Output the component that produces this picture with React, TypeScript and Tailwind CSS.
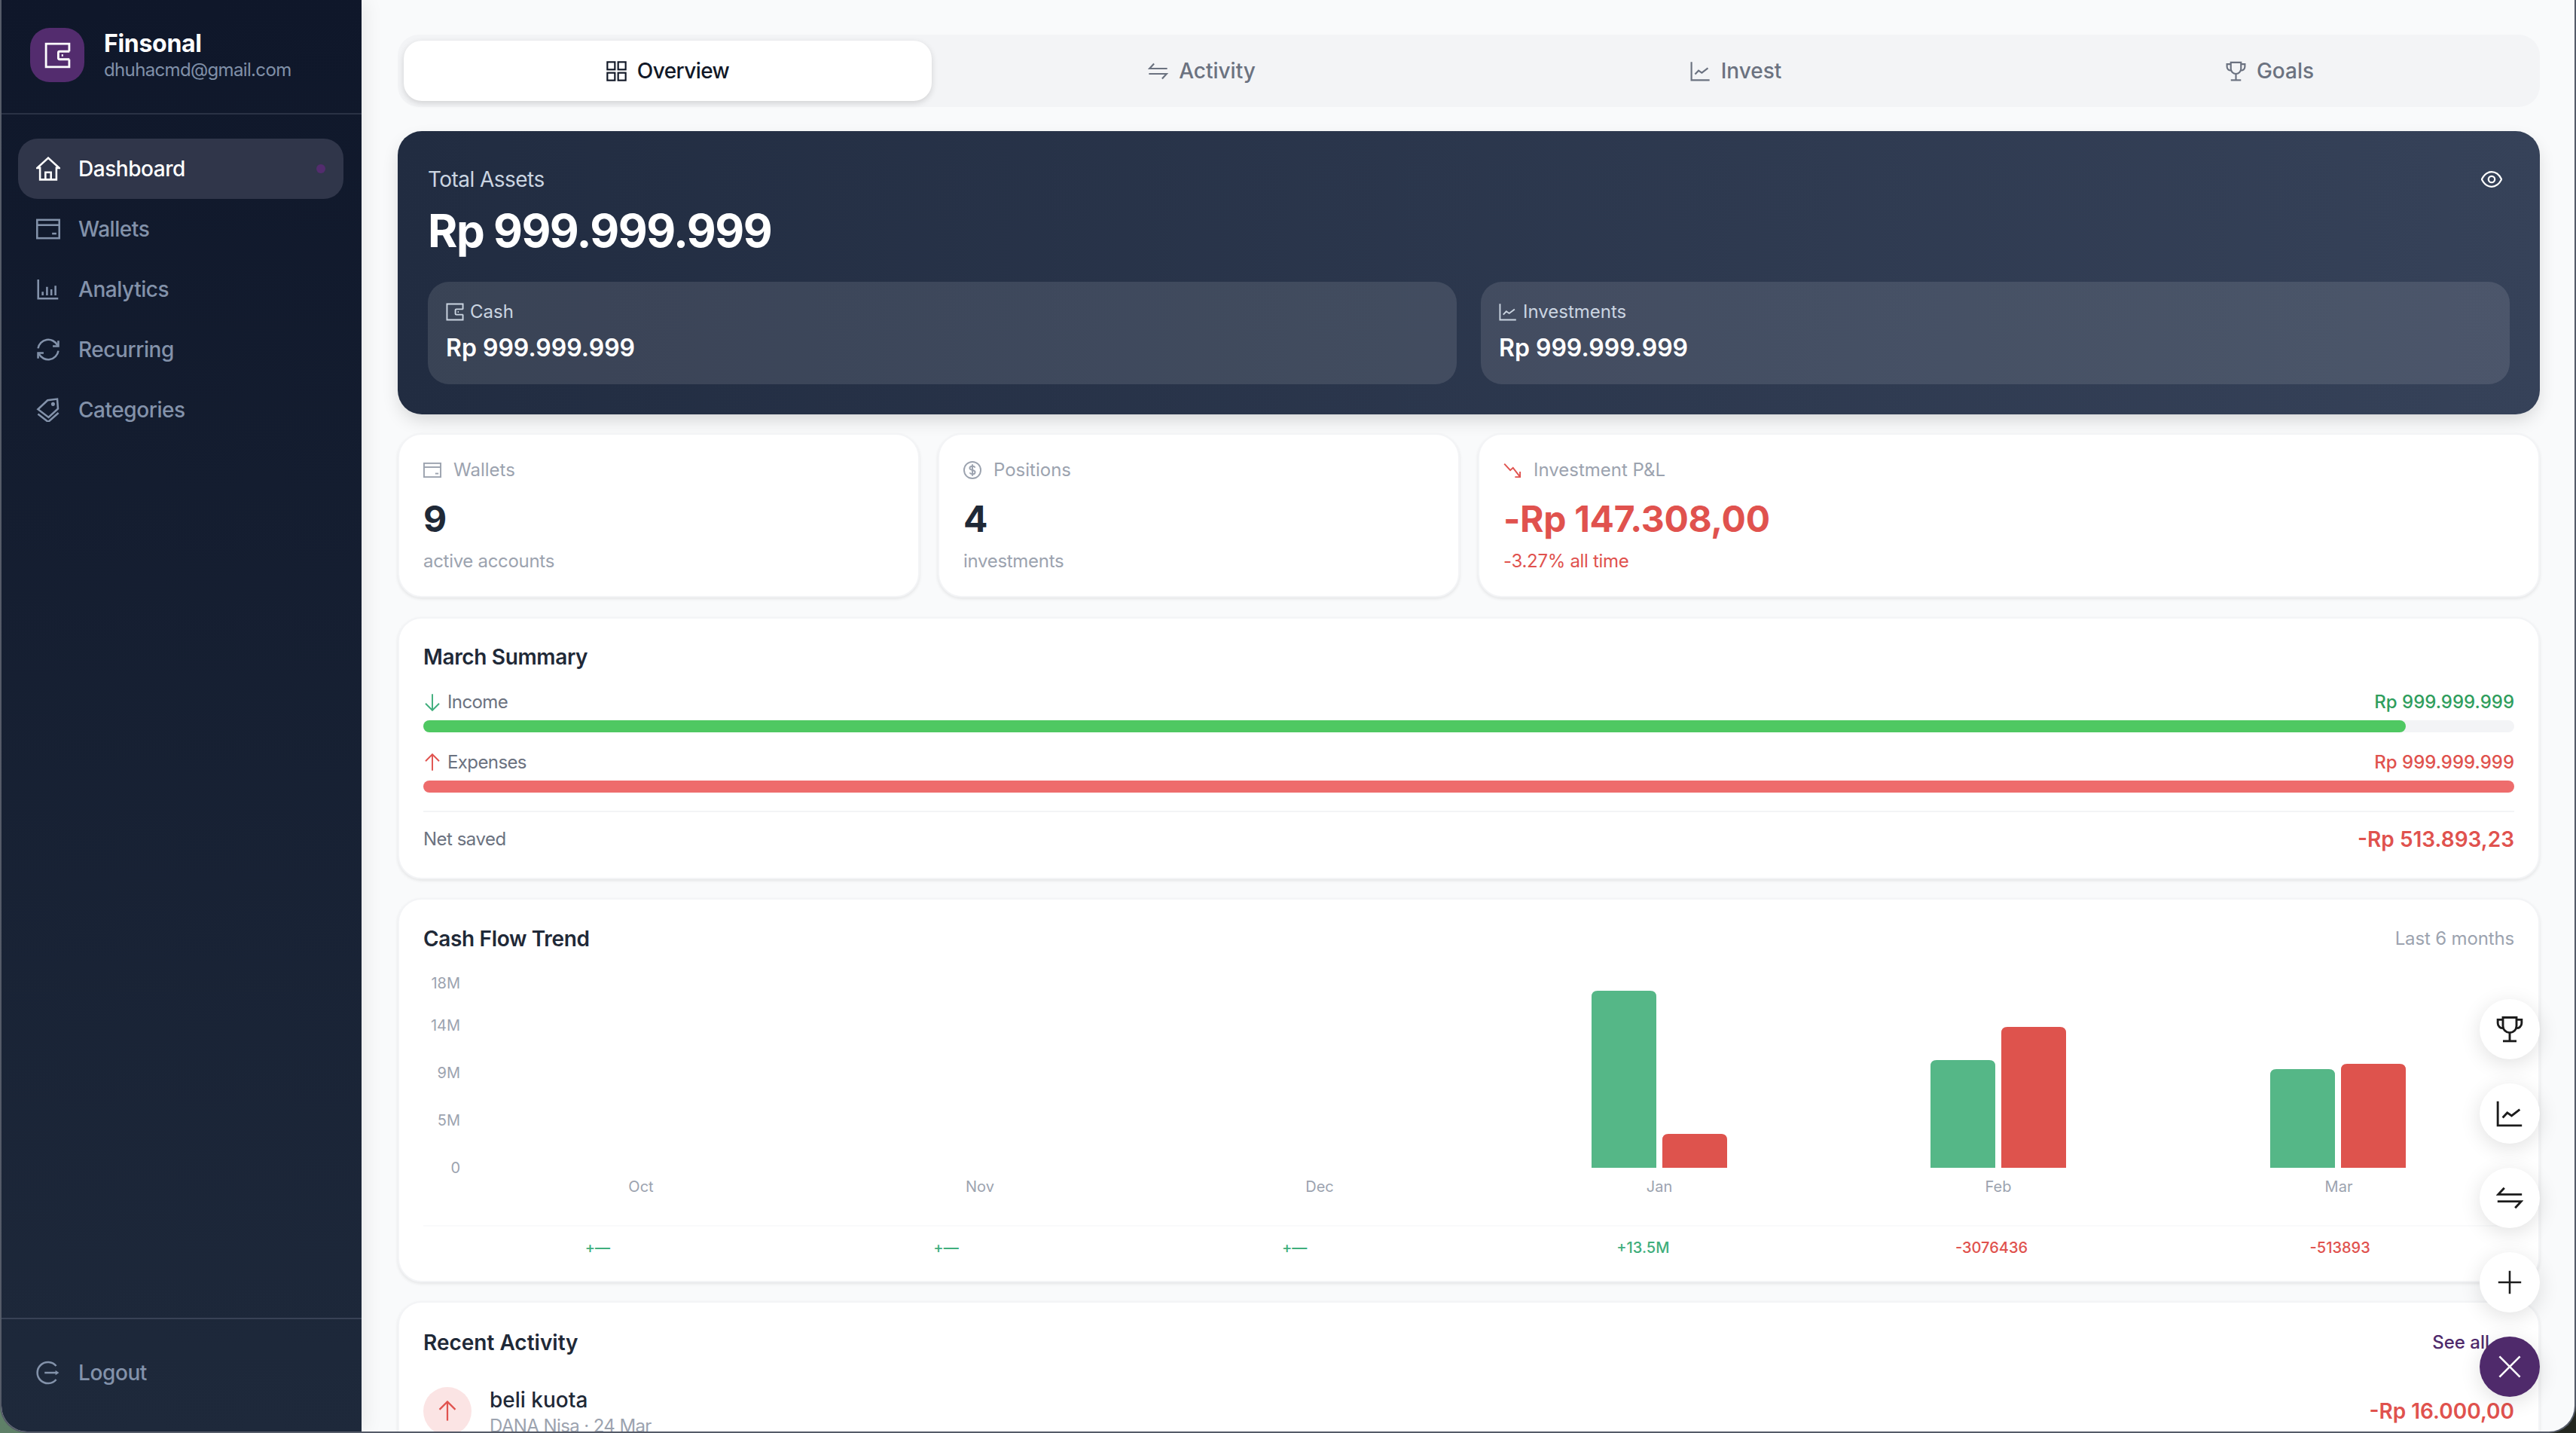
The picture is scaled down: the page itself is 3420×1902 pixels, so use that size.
import type { ReactNode } from "react";

// shared outline icon, square joins like the reference set
function Icon({ size = 32, className, children }: { size?: number; className?: string; children: ReactNode }) {
  return (
    <svg
      width={size}
      height={size}
      viewBox="2 2 20 20"
      fill="none"
      stroke="currentColor"
      strokeWidth={1.6}
      strokeLinejoin="miter"
      className={className}
    >
      {children}
    </svg>
  );
}

const HomeIcon = (p: { size?: number; className?: string }) => (
  <Icon {...p}>
    <path d="M12 3 3 11.3h2.2V21h13.6v-9.7H21Z" />
    <path d="M9.7 21v-6h4.6v6" />
  </Icon>
);
const CardIcon = (p: { size?: number; className?: string }) => (
  <Icon {...p}>
    <rect x="2.8" y="4.4" width="18.4" height="15.2" />
    <path d="M3 8.7h18" />
    <path d="M15.2 15.8h3.6" />
  </Icon>
);
const BarsIcon = (p: { size?: number; className?: string }) => (
  <Icon {...p}>
    <path d="M3.7 3.8v15.8h16.6" />
    <path d="M7.4 14v3M11 10v7M14.6 12v5M18 9v8" />
  </Icon>
);
const RepeatIcon = (p: { size?: number; className?: string }) => (
  <Icon {...p}>
    <path d="M3.6 11A8.5 8.5 0 0 1 19.6 8.4" />
    <path d="M20.4 4.6v4.6h-4.6" />
    <path d="M20.4 13A8.5 8.5 0 0 1 4.4 15.6" />
    <path d="M3.6 19.4v-4.6h4.6" />
  </Icon>
);
const TagsIcon = (p: { size?: number; className?: string }) => (
  <Icon {...p}>
    <path d="M3.5 11.5 11.5 4l8-1 .6 8-7.8 7.2Z" />
    <path d="M3.5 15.5 12 22l8.5-7.5" />
    <circle cx="16" cy="7.2" r=".8" />
  </Icon>
);
const LogoutIcon = (p: { size?: number; className?: string }) => (
  <Icon {...p}>
    <path d="M18.6 6.4a8.8 8.8 0 1 0 0 11.2" />
    <path d="M9 12h10" />
    <path d="m18 10 3 2-3 2Z" fill="currentColor" stroke="none" />
  </Icon>
);
const WalletIcon = (p: { size?: number; className?: string }) => (
  <Icon {...p}>
    <path d="M20.8 9V3.2H3.2v17.6h17.6V15" />
    <path d="M21 9h-7.5a1 1 0 0 0-1 1v4a1 1 0 0 0 1 1H21" />
    <path d="M15 12h1.2" />
  </Icon>
);
const GridIcon = (p: { size?: number; className?: string }) => (
  <Icon {...p}>
    <rect x="3" y="3" width="7.4" height="7.4" />
    <rect x="13.6" y="3" width="7.4" height="7.4" />
    <rect x="3" y="13.6" width="7.4" height="7.4" />
    <rect x="13.6" y="13.6" width="7.4" height="7.4" />
  </Icon>
);
const SwapIcon = (p: { size?: number; className?: string }) => (
  <Icon {...p}>
    <path d="M21 9.4H3.6L8 4.6" />
    <path d="M3 14.6h17.4L16 19.4" />
  </Icon>
);
const LineChartIcon = (p: { size?: number; className?: string }) => (
  <Icon {...p}>
    <path d="M3.2 3v17.8H21" />
    <path d="m6.8 15 3.4-3.6 3.2 2.2 6-4.6" />
  </Icon>
);
const TrophyIcon = (p: { size?: number; className?: string }) => (
  <Icon {...p}>
    <path d="M7 3.4h10v6.2a5 5 0 0 1-10 0Z" />
    <path d="M7 5H3.2v2.6a3.6 3.6 0 0 0 4.2 3.6" />
    <path d="M17 5h3.8v2.6a3.6 3.6 0 0 1-4.2 3.6" />
    <path d="M12 14.6v6" />
    <path d="M7 20.8h10" />
  </Icon>
);
const EyeIcon = (p: { size?: number; className?: string }) => (
  <Icon {...p}>
    <path d="M2.6 12C5 7.2 8.6 5 12 5s7 2.2 9.4 7c-2.4 4.8-6 7-9.4 7s-7-2.2-9.4-7Z" />
    <circle cx="12" cy="12" r="3" />
  </Icon>
);
const DollarIcon = (p: { size?: number; className?: string }) => (
  <Icon {...p}>
    <circle cx="12" cy="12" r="9.2" />
    <path d="M15 9.2c-.5-1-1.6-1.6-3-1.6-1.7 0-3 .8-3 2.2 0 3 6 1.5 6 4.4 0 1.4-1.3 2.2-3 2.2-1.4 0-2.5-.6-3-1.6" />
    <path d="M12 5.6v12.8" />
  </Icon>
);
const TrendDownIcon = (p: { size?: number; className?: string }) => (
  <Icon {...p}>
    <path d="m3 5 6.6 7.2 3-2.8L20 19" />
    <path d="M20.4 13.6v6h-5.6" />
  </Icon>
);
const ArrowDownIcon = (p: { size?: number; className?: string }) => (
  <Icon {...p}>
    <path d="M12 3v18" />
    <path d="m4.5 13.5 7.5 7.5 7.5-7.5" />
  </Icon>
);
const ArrowUpIcon = (p: { size?: number; className?: string }) => (
  <Icon {...p}>
    <path d="M12 21V3" />
    <path d="M4.5 10.5 12 3l7.5 7.5" />
  </Icon>
);

const NAV = [
  { label: "Dashboard", icon: HomeIcon, active: true },
  { label: "Wallets", icon: CardIcon },
  { label: "Analytics", icon: BarsIcon },
  { label: "Recurring", icon: RepeatIcon },
  { label: "Categories", icon: TagsIcon },
];

const TABS = [
  { label: "Overview", icon: GridIcon, active: true },
  { label: "Activity", icon: SwapIcon },
  { label: "Invest", icon: LineChartIcon },
  { label: "Goals", icon: TrophyIcon },
];

const BASE = 267;
const BARS = [
  { x: 1551, top: 32, fill: "#55b787" },
  { x: 1645, top: 222, fill: "#de534d" },
  { x: 2001, top: 124, fill: "#55b787" },
  { x: 2095, top: 80, fill: "#de534d" },
  { x: 2452, top: 136, fill: "#55b787" },
  { x: 2546, top: 129, fill: "#de534d" },
];
const Y_TICKS = [
  { label: "18M", y: 22 },
  { label: "14M", y: 78 },
  { label: "9M", y: 141 },
  { label: "5M", y: 204 },
  { label: "0", y: 267 },
];
const MONTHS = [
  { label: "Oct", x: 289 },
  { label: "Nov", x: 739 },
  { label: "Dec", x: 1190 },
  { label: "Jan", x: 1641 },
  { label: "Feb", x: 2091 },
  { label: "Mar", x: 2543 },
];
const NETS = [
  { v: "+—", cls: "text-[#3fae7c]" },
  { v: "+—", cls: "text-[#3fae7c]" },
  { v: "+—", cls: "text-[#3fae7c]" },
  { v: "+13.5M", cls: "text-[#3fae7c]" },
  { v: "-3076436", cls: "text-[#e0524e]" },
  { v: "-513893", cls: "text-[#e0524e]" },
];

function Sidebar() {
  return (
    <aside className="relative z-10 flex h-full w-[478px] shrink-0 flex-col bg-linear-to-b from-[#0f172a] to-[#1e293b] shadow-[4px_0_24px_rgba(0,0,0,0.08)]">
      <div className="flex h-[152px] items-center gap-[26px] border-b-2 border-[#2a3245] pb-[4px] pl-[38px]">
        <div className="flex h-[72px] w-[72px] items-center justify-center rounded-[26px] bg-[#532c6e] text-white">
          <WalletIcon size={35} />
        </div>
        <div>
          <div className="text-[32px] leading-[40px] font-bold tracking-[-0.3px] text-white">Finsonal</div>
          <div className="text-[24px] leading-[30px] tracking-[-0.65px] text-[#8090a8]">dhuhacmd@gmail.com</div>
        </div>
      </div>
      <nav className="flex flex-1 flex-col pt-[32px] pr-[24px] pl-[22px]">
        {NAV.map((n) => (
          <div
            key={n.label}
            className={
              n.active
                ? "flex h-[80px] items-center gap-[24px] rounded-[26px] bg-[#30364a] px-[24px] text-[28px] font-medium tracking-[-0.45px] text-white"
                : "flex h-[80px] items-center gap-[24px] rounded-[26px] px-[24px] text-[28px] font-medium tracking-[-0.45px] text-[#8392aa]"
            }
          >
            <n.icon />
            <span className="flex-1">{n.label}</span>
            {n.active && <span className="h-[12px] w-[12px] rounded-full bg-[#532c6e]" />}
          </div>
        ))}
      </nav>
      <div className="border-t-2 border-[#394256] px-[22px] pt-[31px] pb-[38px]">
        <div className="flex h-[80px] items-center gap-[24px] px-[24px] text-[28px] font-medium tracking-[-0.4px] text-[#8392aa]">
          <LogoutIcon />
          <span>Logout</span>
        </div>
      </div>
    </aside>
  );
}

function Hero() {
  return (
    <section className="mt-[32px] shrink-0 rounded-[32px] bg-linear-to-r from-[#212c41] to-[#364259] px-[40px] pt-[44px] pb-[40px] shadow-[0_10px_24px_-4px_rgba(0,0,0,0.16)]">
      <div className="flex items-center justify-between pr-[10px]">
        <span className="text-[28px] leading-[40px] tracking-[-0.55px] text-[#cbd5e1]">Total Assets</span>
        <EyeIcon size={28} className="text-white" />
      </div>
      <div className="mt-[12px] text-[60px] leading-[72px] font-bold tracking-[-1.5px] text-white">Rp 999.999.999</div>
      <div className="mt-[32px] grid grid-cols-2 gap-[32px]">
        {[
          { label: "Cash", icon: WalletIcon },
          { label: "Investments", icon: LineChartIcon },
        ].map((c) => (
          <div key={c.label} className="rounded-[28px] bg-white/11 p-[24px]">
            <div className="flex items-center gap-[8px] text-[24px] leading-[32px] text-[#cbd5e1]">
              <c.icon size={24} />
              <span>{c.label}</span>
            </div>
            <div className="mt-[8px] text-[32px] leading-[48px] font-semibold text-white">Rp 999.999.999</div>
          </div>
        ))}
      </div>
    </section>
  );
}

const CARD = "rounded-[32px] border-2 border-[#f3f4f6] bg-white shadow-[0_2px_4px_rgba(0,0,0,0.09)]";

function Stat({
  label,
  icon,
  value,
  note,
  valueCls,
  noteCls,
  span,
}: {
  label: string;
  icon: ReactNode;
  value: string;
  note: string;
  valueCls: string;
  noteCls: string;
  span?: boolean;
}) {
  return (
    <div className={`${CARD} px-[32px] pt-[31px] pb-[30px] ${span ? "col-span-2" : ""}`}>
      <div className="flex items-center gap-[16px] text-[24px] leading-[32px] text-[#9ca3af]">
        {icon}
        <span>{label}</span>
      </div>
      <div className={`mt-[17px] text-[48px] leading-[64px] font-bold tracking-[-0.35px] ${valueCls}`}>{value}</div>
      <div className={`mt-[8px] text-[24px] leading-[32px] tracking-[-0.3px] ${noteCls}`}>{note}</div>
    </div>
  );
}

function Summary() {
  return (
    <section className={`${CARD} shrink-0 px-[32px] pt-[31px] pb-[31px]`}>
      <h2 className="text-[28px] leading-[40px] font-semibold tracking-[-0.35px] text-[#1f2937]">March Summary</h2>
      <div className="mt-[24px] flex items-center justify-between text-[24px] leading-[32px]">
        <span className="flex items-center gap-[8px] tracking-[-0.6px] text-[#6b7280]">
          <ArrowDownIcon size={24} className="text-[#3fae7c]" />
          Income
        </span>
        <span className="font-medium text-[#2f9e5d]">Rp 999.999.999</span>
      </div>
      <div className="mt-[8px] h-[16px] rounded-full bg-[#f3f4f6]">
        <div className="h-full w-[94.8%] rounded-full bg-[#4fc862]" />
      </div>
      <div className="mt-[24px] flex items-center justify-between text-[24px] leading-[32px]">
        <span className="flex items-center gap-[8px] tracking-[-0.6px] text-[#6b7280]">
          <ArrowUpIcon size={24} className="text-[#e0524e]" />
          Expenses
        </span>
        <span className="font-medium text-[#e0524e]">Rp 999.999.999</span>
      </div>
      <div className="mt-[8px] h-[16px] rounded-full bg-[#ee6c6c]" />
      <div className="mt-[24px] flex items-center justify-between border-t-2 border-[#f3f4f6] pt-[16px]">
        <span className="text-[24px] leading-[40px] tracking-[-0.5px] text-[#6b7280]">Net saved</span>
        <span className="text-[28px] leading-[40px] font-semibold text-[#e0524e]">-Rp 513.893,23</span>
      </div>
    </section>
  );
}

function CashFlow() {
  return (
    <section className={`${CARD} shrink-0 px-[32px] pt-[32px] pb-[32px]`}>
      <div className="flex items-center justify-between">
        <h2 className="text-[28px] leading-[40px] font-semibold tracking-[-0.35px] text-[#1f2937]">Cash Flow Trend</h2>
        <span className="text-[24px] tracking-[-0.15px] text-[#9ca3af]">Last 6 months</span>
      </div>
      <svg width="2776" height="343" className="mt-[17px] block">
        {Y_TICKS.map((t) => (
          <text key={t.label} x="49" y={t.y + 7} textAnchor="end" fontSize="20" fill="#9ca3af">
            {t.label}
          </text>
        ))}
        {BARS.map((b) => (
          <path
            key={b.x}
            d={`M${b.x} ${BASE}V${b.top + 8}Q${b.x} ${b.top} ${b.x + 8} ${b.top}H${b.x + 78}Q${b.x + 86} ${b.top} ${b.x + 86} ${b.top + 8}V${BASE}Z`}
            fill={b.fill}
          />
        ))}
        {MONTHS.map((m) => (
          <text key={m.label} x={m.x} y="299" textAnchor="middle" fontSize="20" fill="#9ca3af">
            {m.label}
          </text>
        ))}
      </svg>
      <div className="grid grid-cols-6 border-t-2 border-[#f9fafb] pt-[16px]">
        {NETS.map((n, i) => (
          <div key={i} className={`text-center text-[20px] leading-[24px] font-medium ${n.cls}`}>
            {n.v}
          </div>
        ))}
      </div>
    </section>
  );
}

function Recent() {
  return (
    <section className={`${CARD} shrink-0 px-[32px] pt-[33px] pb-[32px]`}>
      <div className="flex items-center justify-between">
        <h2 className="text-[28px] leading-[40px] font-semibold text-[#1f2937]">Recent Activity</h2>
        <span className="pr-[33px] text-[24px] font-medium text-[#4f2a6b]">
          See all
        </span>
      </div>
      <div className="mt-[36px] flex items-center gap-[24px]">
        <div className="flex h-[64px] w-[64px] items-center justify-center rounded-full bg-[#fbe4e4] text-[#e0524e]">
          <ArrowUpIcon size={28} />
        </div>
        <div className="flex-1">
          <div className="text-[28px] leading-[40px] font-medium text-[#1f2937]">beli kuota</div>
          <div className="text-[24px] leading-[30px] tracking-[-0.6px] text-[#9ca3af]">DANA Nisa · 24 Mar</div>
        </div>
        <span className="text-[28px] font-semibold text-[#e0524e]">-Rp 16.000,00</span>
      </div>
    </section>
  );
}

function Fabs() {
  const items = [TrophyIcon, LineChartIcon, SwapIcon];
  return (
    <div className="absolute right-[46px] bottom-[46px] z-20 flex flex-col gap-[32px]">
      {items.map((I, i) => (
        <button
          key={i}
          className="flex h-[80px] w-[80px] items-center justify-center rounded-full bg-white text-[#1c1c1c] shadow-[0_6px_28px_rgba(0,0,0,0.12)]"
        >
          <I size={36} />
        </button>
      ))}
      <button className="flex h-[80px] w-[80px] items-center justify-center rounded-full bg-white text-[#1c1c1c] shadow-[0_6px_28px_rgba(0,0,0,0.12)]">
        <Icon size={32}>
          <path d="M12 2.5v19M2.5 12h19" />
        </Icon>
      </button>
      <button className="flex h-[80px] w-[80px] items-center justify-center rounded-full bg-[#4f2a6b] text-white shadow-[0_6px_28px_rgba(0,0,0,0.12)]">
        <Icon size={32}>
          <path d="m3.5 3.5 17 17M20.5 3.5l-17 17" />
        </Icon>
      </button>
    </div>
  );
}

export default function App() {
  return (
    <div className="h-[1902px] w-[3420px] overflow-hidden bg-linear-to-r from-[#5f8068] to-[#23261f] [font-family:Inter,'Liberation_Sans',sans-serif]">
      <div className="relative flex h-full overflow-hidden rounded-b-[36px] border-x-2 border-b-2 border-[#555b68] bg-[#f9fafb]">
        <Sidebar />
        <main className="flex min-w-0 flex-1 flex-col overflow-hidden pt-[46px] pr-[46px] pl-[48px]">
          <div className="grid h-[96px] shrink-0 grid-cols-4 gap-[8px] rounded-[28px] bg-[#f3f4f6] p-[8px]">
            {TABS.map((t) => (
              <div
                key={t.label}
                className={
                  t.active
                    ? "flex items-center justify-center gap-[14px] rounded-[24px] bg-white text-[28px] font-medium tracking-[-0.6px] text-[#111827] shadow-[0_3px_8px_rgba(0,0,0,0.14)]"
                    : "flex items-center justify-center gap-[14px] rounded-[24px] text-[28px] font-medium text-[#6b7280]"
                }
              >
                <t.icon size={27} />
                <span>{t.label}</span>
              </div>
            ))}
          </div>
          <Hero />
          <div className="mt-[25px] grid shrink-0 grid-cols-4 gap-[24px]">
            <Stat
              label="Wallets"
              icon={<CardIcon size={24} />}
              value="9"
              note="active accounts"
              valueCls="text-[#1f2937]"
              noteCls="text-[#9ca3af]"
            />
            <Stat
              label="Positions"
              icon={<DollarIcon size={24} />}
              value="4"
              note="investments"
              valueCls="text-[#1f2937]"
              noteCls="text-[#9ca3af]"
            />
            <Stat
              label="Investment P&L"
              icon={<TrendDownIcon size={24} className="text-[#e0524e]" />}
              value="-Rp 147.308,00"
              note="-3.27% all time"
              valueCls="text-[#e0524e]"
              noteCls="text-[#e0524e]"
              span
            />
          </div>
          <div className="mt-[26px] flex shrink-0 flex-col gap-[25px]">
            <Summary />
            <CashFlow />
            <Recent />
          </div>
        </main>
        <Fabs />
      </div>
    </div>
  );
}
